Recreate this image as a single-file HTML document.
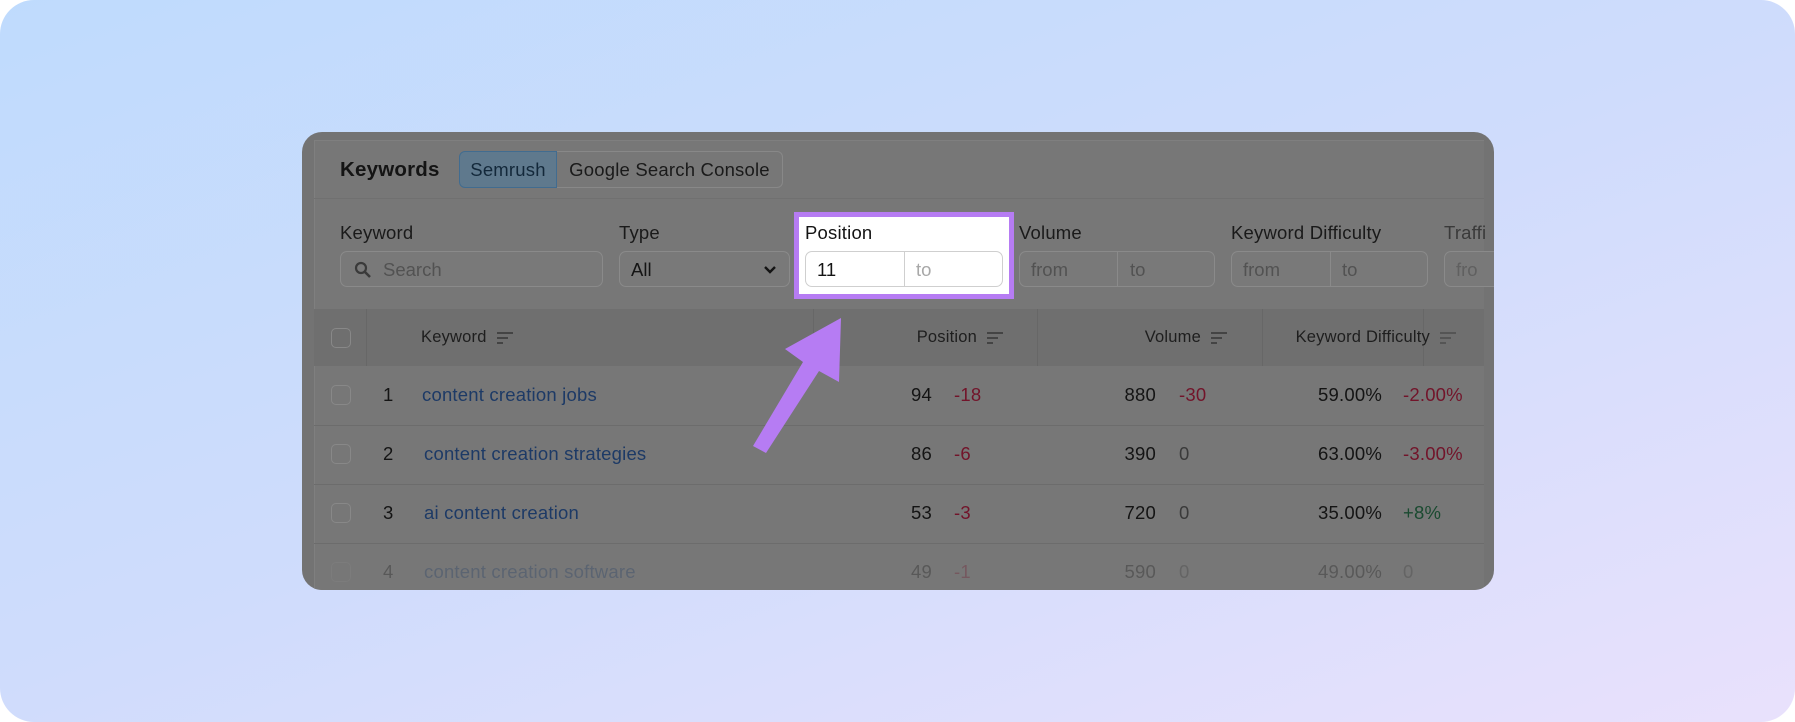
<!DOCTYPE html>
<html><head><meta charset="utf-8"><style>
*{box-sizing:border-box;margin:0;padding:0}
body{width:1795px;height:722px;background:#fff;font-family:"Liberation Sans",sans-serif;position:relative;overflow:hidden}
.bg{position:absolute;left:0;top:0;width:1795px;height:722px;border-radius:34px;background:linear-gradient(160deg,#bfdbfd 0%,#cfdcfc 50%,#e9e1fc 100%)}
.card{position:absolute;left:302px;top:132px;width:1192px;height:458px;border-radius:20px;background:#737373;overflow:hidden}
.inner{position:absolute;left:12px;top:8px;right:10px;bottom:0;background:#777;border-left:1px solid #7f7f7f;border-top:1px solid #7f7f7f}
.a{position:absolute;white-space:nowrap;letter-spacing:.2px}
.t{color:#141414}
.lbl{font-size:18.5px;color:#1a1a1a}
.inp{position:absolute;height:36px;border:1px solid #8a8a8a;border-radius:7px;background:#797979}
.ph{position:absolute;font-size:18.5px;color:#525252;top:7px}
.hdr{position:absolute;left:12px;right:10px;top:177px;height:57px;background:#6f6f6f}
.vd{position:absolute;top:177px;height:57px;width:1px;background:#676767}
.hl{position:absolute;left:12px;right:10px;height:1px;background:#6c6c6c}
.h{font-size:16.5px;color:#1e1e1e;top:196px}
.cb{position:absolute;left:29px;width:20px;height:20px;border:1px solid #888;border-radius:5px}
.r{font-size:18.5px}
.lnk{color:#1d3a66}
.red{color:#72142a}
.grn{color:#1a4a30}
.sort{display:inline-block;vertical-align:middle;margin-left:10px;width:16px;height:12px;position:relative}
.sort i{position:absolute;left:0;height:2px;background:#444}
</style></head><body>
<div class="bg"></div>
<div class="card">
<div class="inner"></div>
<div class="a t" style="left:38px;top:26px;font-size:20.5px;font-weight:bold">Keywords</div>
<div class="a" style="left:157px;top:19px;width:98px;height:37px;background:#5f798d;border:1px solid #416c90;border-radius:6px 0 0 6px;font-size:18.5px;color:#13283a;text-align:center;line-height:35px">Semrush</div>
<div class="a" style="left:255px;top:19px;width:226px;height:37px;border:1px solid #888;border-left:none;border-radius:0 6px 6px 0;font-size:18.5px;color:#1a1a1a;text-align:center;line-height:35px">Google Search Console</div>
<div class="hl" style="top:66px;background:#707070"></div>

<div class="a lbl" style="left:38px;top:90px">Keyword</div>
<div class="inp" style="left:38px;top:119px;width:263px"><svg style="position:absolute;left:13px;top:9px" width="18" height="18" viewBox="0 0 18 18"><circle cx="7" cy="7" r="5" fill="none" stroke="#3a3a3a" stroke-width="2.2"/><path d="M11 11l5 5" stroke="#3a3a3a" stroke-width="2.6"/></svg><span class="ph" style="left:42px">Search</span></div>
<div class="a lbl" style="left:317px;top:90px">Type</div>
<div class="inp" style="left:317px;top:119px;width:171px"><span class="ph" style="left:11px;color:#141414">All</span><svg style="position:absolute;right:12px;top:13px" width="14" height="10" viewBox="0 0 14 10"><path d="M2 2l5 5 5-5" fill="none" stroke="#141414" stroke-width="2.4"/></svg></div>

<div class="a" style="left:492px;top:80px;width:220px;height:87px;background:#fff;border:5px solid #b67cf3"></div>
<div class="a lbl" style="left:503px;top:90px;color:#141414">Position</div>
<div class="inp" style="left:503px;top:119px;width:198px;background:#fff;border-color:#cfcfcf"><span class="ph" style="left:11px;color:#141414">11</span><div style="position:absolute;left:98px;top:0;bottom:0;width:1px;background:#cfcfcf"></div><span class="ph" style="left:110px;color:#a8a8a8">to</span></div>

<div class="a lbl" style="left:717px;top:90px">Volume</div>
<div class="inp" style="left:717px;top:119px;width:196px"><span class="ph" style="left:11px">from</span><div style="position:absolute;left:97px;top:0;bottom:0;width:1px;background:#8a8a8a"></div><span class="ph" style="left:110px">to</span></div>
<div class="a lbl" style="left:929px;top:90px">Keyword Difficulty</div>
<div class="inp" style="left:929px;top:119px;width:197px"><span class="ph" style="left:11px">from</span><div style="position:absolute;left:98px;top:0;bottom:0;width:1px;background:#8a8a8a"></div><span class="ph" style="left:110px">to</span></div>
<div class="a lbl" style="left:1142px;top:90px;color:#3a3a3a">Traffi</div>
<div class="inp" style="left:1142px;top:119px;width:60px;border-right:none;border-radius:7px 0 0 7px"><span class="ph" style="left:11px;color:#606060">fro</span></div>

<div class="hdr"></div>
<div class="vd" style="left:64px"></div>
<div class="vd" style="left:511px"></div>
<div class="vd" style="left:735px"></div>
<div class="vd" style="left:960px"></div>
<div class="vd" style="left:1121px"></div>
<div class="cb" style="top:196px"></div>
<div class="a h" style="left:119px">Keyword<span class="sort"><i style="top:0;width:16px"></i><i style="top:5px;width:11px"></i><i style="top:10px;width:6px"></i></span></div>
<div class="a h" style="right:491px">Position<span class="sort"><i style="top:0;width:16px"></i><i style="top:5px;width:11px"></i><i style="top:10px;width:6px"></i></span></div>
<div class="a h" style="right:267px">Volume<span class="sort"><i style="top:0;width:16px"></i><i style="top:5px;width:11px"></i><i style="top:10px;width:6px"></i></span></div>
<div class="a h" style="right:38px">Keyword Difficulty<span class="sort"><i style="top:0;width:16px;background:#555"></i><i style="top:5px;width:11px;background:#555"></i><i style="top:10px;width:6px;background:#555"></i></span></div>

<div class="hl" style="top:293px"></div>
<div class="hl" style="top:352px"></div>
<div class="hl" style="top:411px"></div>

<div class="cb" style="top:253px"></div>
<div class="a r t" style="left:81px;top:252px">1</div>
<div class="a r lnk" style="left:120px;top:252px">content creation jobs</div>
<div class="a r t" style="right:562px;top:252px">94</div><div class="a r red" style="left:652px;top:252px">-18</div>
<div class="a r t" style="right:338px;top:252px">880</div><div class="a r red" style="left:877px;top:252px">-30</div>
<div class="a r t" style="right:112px;top:252px">59.00%</div><div class="a r red" style="left:1101px;top:252px">-2.00%</div>

<div class="cb" style="top:312px"></div>
<div class="a r t" style="left:81px;top:311px">2</div>
<div class="a r lnk" style="left:122px;top:311px">content creation strategies</div>
<div class="a r t" style="right:562px;top:311px">86</div><div class="a r red" style="left:652px;top:311px">-6</div>
<div class="a r t" style="right:338px;top:311px">390</div><div class="a r" style="left:877px;top:311px;color:#3a3a3a">0</div>
<div class="a r t" style="right:112px;top:311px">63.00%</div><div class="a r red" style="left:1101px;top:311px">-3.00%</div>

<div class="cb" style="top:371px"></div>
<div class="a r t" style="left:81px;top:370px">3</div>
<div class="a r lnk" style="left:122px;top:370px">ai content creation</div>
<div class="a r t" style="right:562px;top:370px">53</div><div class="a r red" style="left:652px;top:370px">-3</div>
<div class="a r t" style="right:338px;top:370px">720</div><div class="a r" style="left:877px;top:370px;color:#3a3a3a">0</div>
<div class="a r t" style="right:112px;top:370px">35.00%</div><div class="a r grn" style="left:1101px;top:370px">+8%</div>

<div style="opacity:.3">
<div class="cb" style="top:430px"></div>
<div class="a r t" style="left:81px;top:429px">4</div>
<div class="a r lnk" style="left:122px;top:429px">content creation software</div>
<div class="a r t" style="right:562px;top:429px">49</div><div class="a r red" style="left:652px;top:429px">-1</div>
<div class="a r t" style="right:338px;top:429px">590</div><div class="a r" style="left:877px;top:429px;color:#3a3a3a">0</div>
<div class="a r t" style="right:112px;top:429px">49.00%</div><div class="a r" style="left:1101px;top:429px;color:#3a3a3a">0</div>
</div>
</div>
<svg style="position:absolute;left:0;top:0" width="1795" height="722"><polygon points="841,318 839,382 819,371 766,453 753,446 803,362 785,349" fill="#b67cf3"/></svg>
</body></html>
